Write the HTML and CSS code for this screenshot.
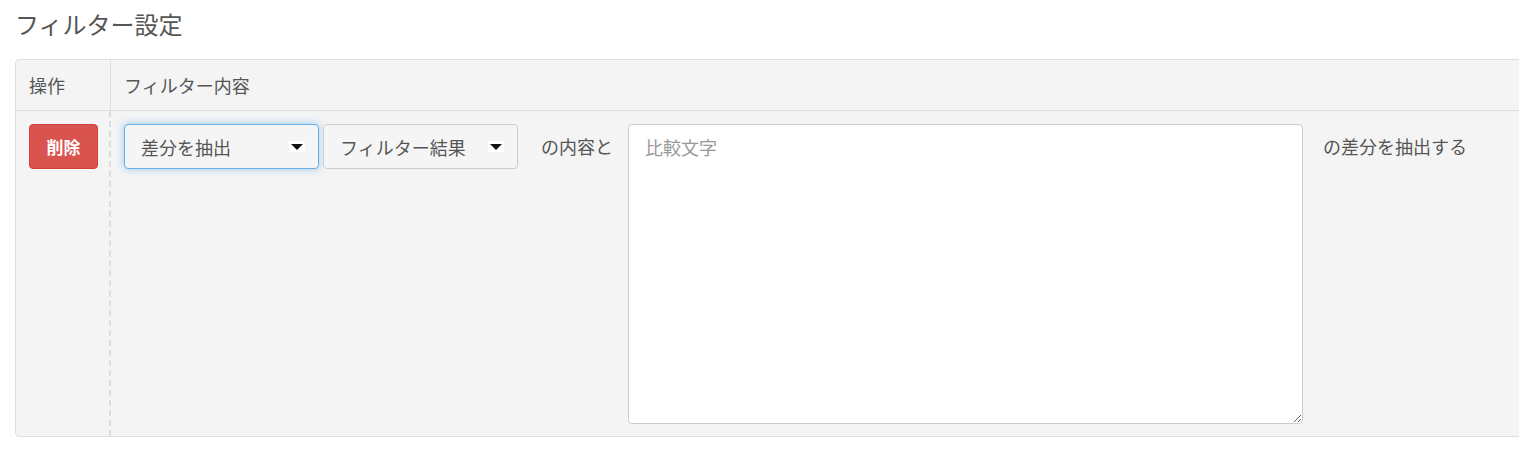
FILE: index.html
```html
<!DOCTYPE html>
<html lang="ja">
<head>
  <meta charset="UTF-8">
  <title>フィルター設定</title>
  <link rel="stylesheet" href="styles.css">
</head>
<body>
  <h2 class="page-title">フィルター設定</h2>

  <div class="filter-panel">
    <div class="filter-head">
      <div class="col-op">操作</div>
      <div class="col-body">フィルター内容</div>
    </div>

    <div class="filter-row">
      <div class="col-op">
        <button class="btn-delete">削除</button>
      </div>
      <div class="col-body">
        <div class="select-box focused">
          <span>差分を抽出</span>
          <svg class="caret" width="16" height="11" viewBox="0 0 16 11">
            <rect width="16" height="11" fill="#fff"/>
            <path d="M2 3 L14 3 L8 9 Z" fill="#111"/>
          </svg>
        </div>
        <div class="select-box">
          <span>フィルター結果</span>
          <svg class="caret" width="16" height="11" viewBox="0 0 16 11">
            <rect width="16" height="11" fill="#fff"/>
            <path d="M2 3 L14 3 L8 9 Z" fill="#111"/>
          </svg>
        </div>
        <span class="inline-text before-text">の内容と</span>
        <textarea class="compare-text" placeholder="比較文字"></textarea>
        <span class="inline-text">の差分を抽出する</span>
      </div>
    </div>
  </div>
</body>
</html>
```

FILE: styles.css
```css
* {
  box-sizing: border-box;
  margin: 0;
  padding: 0;
}

body {
  font-family: "Noto Sans CJK JP", "Noto Sans", sans-serif;
  color: #555;
  background: #fff;
  overflow: hidden;
}

.page-title {
  font-size: 24px;
  font-weight: normal;
  line-height: 36px;
  padding: 6px 0 0 15px;
  color: #555;
}

.filter-panel {
  margin: 17px 0 0 15px;
  width: 1560px;
  border: 1px solid #ddd;
  border-radius: 4px;
  background: #f4f4f4;
}

.filter-head {
  display: flex;
  height: 51px;
  border-bottom: 1px solid #ddd;
  font-size: 18px;
}

.filter-head .col-op {
  width: 95px;
  border-right: 1px solid #ddd;
  padding: 12px 0 0 13px;
}

.filter-head .col-body {
  padding: 12px 0 0 13px;
}

.filter-row {
  display: flex;
  height: 325px;
}

.filter-row .col-op {
  width: 95px;
  border-right: 2px dashed #ddd;
  padding: 13px 0 0 13px;
}

.filter-row .col-body {
  display: flex;
  align-items: flex-start;
  padding: 13px 0 0 13px;
}

.btn-delete {
  width: 69px;
  height: 45px;
  background: #d9534f;
  border: 1px solid #d43f3a;
  border-radius: 4px;
  color: #fff;
  font-family: inherit;
  font-size: 17px;
  font-weight: bold;
}

.select-box {
  display: flex;
  align-items: center;
  justify-content: space-between;
  width: 195px;
  height: 45px;
  margin-right: 4px;
  padding: 0 13px 0 16px;
  border: 1px solid #ccc;
  border-radius: 4px;
  background: #f5f5f5;
  font-size: 18px;
  color: #555;
}

.select-box.focused {
  border-color: #66afe9;
  box-shadow: 0 0 8px rgba(102, 175, 233, 0.6);
}

.inline-text {
  line-height: 45px;
  font-size: 18px;
  padding: 0 0 0 20px;
  white-space: nowrap;
}

.before-text {
  padding: 0 15px 0 19px;
}

.compare-text {
  width: 675px;
  height: 300px;
  padding: 9px 16px;
  border: 1px solid #ccc;
  border-radius: 4px;
  background: #fff;
  font-family: inherit;
  font-size: 18px;
  color: #555;
  resize: both;
}

.compare-text::placeholder {
  color: #999;
}
```
